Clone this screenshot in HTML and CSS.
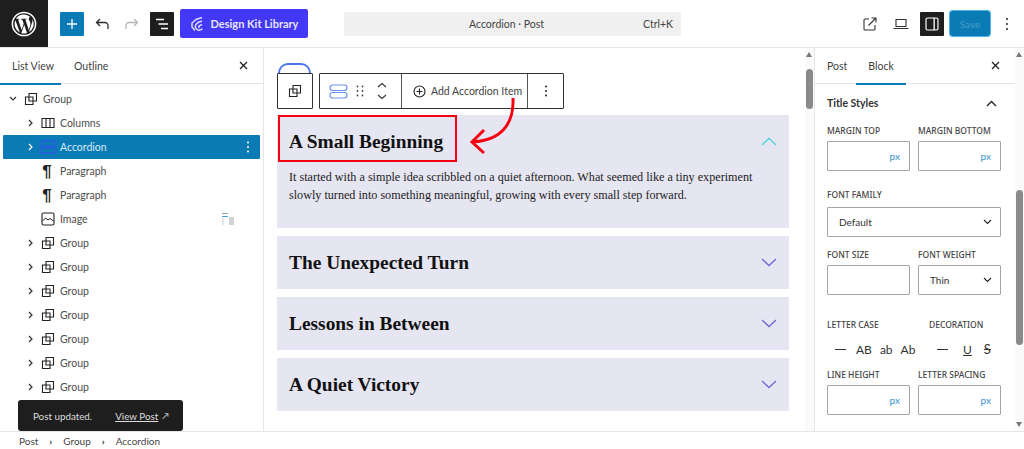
FILE: index.html
```html
<!DOCTYPE html>
<html lang="en">
<head>
<meta charset="utf-8">
<title>Accordion · Post</title>
<link rel="stylesheet" href="styles.css">
</head>
<body>
<div class="app">
  <header class="topbar">
    <div class="wp-logo">
      <svg width="26" height="26" viewBox="0 0 26 26"><circle cx="13" cy="13" r="11.600" fill="none" stroke="#fff" stroke-width="1.500"/><path fill="#fff" d="M3.600 13c0 3.700 2.200 6.900 5.300 8.500L4.400 9.200A9.400 9.400 0 0 0 3.600 13zm15.800-.5c0-1.200-.4-2-.8-2.600-.5-.8-.9-1.400-.9-2.200 0-.9.600-1.700 1.600-1.700h.1A9.400 9.400 0 0 0 5 7.800h.6c1 0 2.500-.1 2.500-.1.500 0 .6.700.1.800 0 0-.5.100-1.100.1l3.500 10.400 2.100-6.300-1.500-4.100c-.5 0-1-.1-1-.1-.5 0-.5-.8.100-.8 0 0 1.600.1 2.500.1 1 0 2.500-.1 2.500-.1.500 0 .6.700.1.800 0 0-.5.100-1.100.1l3.500 10.300 1-3.200c.4-1.300.7-2.200.7-3zm-6.200 1.300-2.900 8.400a9.500 9.500 0 0 0 5.800-.2l-.1-.1zm8.300-5.500v1c0 1-.2 2-.7 3.300l-2.900 8.400a9.400 9.400 0 0 0 3.600-12.700z"/></svg>
    </div>
    <div class="top-left">
      <button class="btn-add" type="button"><svg width="12" height="12" viewBox="0 0 12 12"><path d="M6 1v10M1 6h10" stroke="#fff" stroke-width="1.300"/></svg></button>
      <svg class="ico-undo" width="16" height="16" viewBox="0 0 16 16"><path d="M14 13V9.500A3 3 0 0 0 11 6.500H3M6 3 2.500 6.500 6 10" fill="none" stroke="#2b2b2b" stroke-width="1.300"/></svg>
      <svg class="ico-redo" width="16" height="16" viewBox="0 0 16 16"><path d="M2 13V9.500A3 3 0 0 1 5 6.500h8M10 3l3.500 3.500L10 10" fill="none" stroke="#b5b5b5" stroke-width="1.300"/></svg>
      <button class="btn-list" type="button"><svg width="14" height="12" viewBox="0 0 14 12"><path d="M1 1.500h8M3.500 6h9.500M6 10.500h7" stroke="#fff" stroke-width="1.300"/></svg></button>
      <button class="btn-kit" type="button">
        <svg width="14" height="16" viewBox="0 0 14 16"><path d="M12 1.500 6 3.500 2 7v4l3 3.500M12 5 8 6.500 5.500 9v3l3 2.500 4-1.500M12 8.500 9 10v2" fill="none" stroke="#d9d7ff" stroke-width="1.500"/></svg>
        <span>Design Kit Library</span>
      </button>
    </div>
    <div class="cmd"><span class="cmd-title">Accordion · Post</span><span class="cmd-key">Ctrl+K</span></div>
    <div class="top-right">
      <svg width="14" height="14" viewBox="0 0 14 14"><path d="M6 2H2a1 1 0 0 0-1 1v9a1 1 0 0 0 1 1h9a1 1 0 0 0 1-1V8M5.500 8.500l7.500-7.500M8.500 1H13v4.500" fill="none" stroke="#333" stroke-width="1.100"/></svg>
      <svg class="ico-laptop" width="16" height="12" viewBox="0 0 16 12"><path d="M3 1.500h10v7H3zM.5 10.500h15" fill="none" stroke="#333" stroke-width="1.100"/></svg>
      <button class="btn-panel" type="button"><svg width="14" height="14" viewBox="0 0 14 14"><rect x="1" y="1" width="12" height="12" rx="1.500" fill="none" stroke="#fff" stroke-width="1.200"/><rect x="8.500" y="1" width="1.300" height="12" fill="#fff"/></svg></button>
      <button class="btn-save" type="button">Save</button>
      <svg class="ico-more" width="4" height="14" viewBox="0 0 4 14"><circle cx="2" cy="2" r="1.100" fill="#333"/><circle cx="2" cy="7" r="1.100" fill="#333"/><circle cx="2" cy="12" r="1.100" fill="#333"/></svg>
    </div>
  </header>

  <div class="workspace">
    <aside class="left">
      <div class="tabs left-tabs">
        <span class="tab tab-on tab-list">List View</span>
        <span class="tab tab-outline">Outline</span>
        <svg class="tab-x" width="9" height="9" viewBox="0 0 9 9"><path d="M1 1l7 7M8 1 1 8" stroke="#222" stroke-width="1.300"/></svg>
      </div>
      <ul class="tree">
        <li class="row lvl0"><svg class="chev" width="8" height="6" viewBox="0 0 8 6"><path d="M1 1l3 3 3-3" fill="none" stroke="#333" stroke-width="1.200"/></svg><svg class="bi" width="14" height="14" viewBox="0 0 14 14"><path d="M5 1.500h7.500V9H5zM1.500 5H9v7.500H1.500z" fill="none" stroke="#222" stroke-width="1.100"/></svg><span>Group</span></li>
        <li class="row"><svg class="chev" width="6" height="8" viewBox="0 0 6 8"><path d="M1 1l3 3-3 3" fill="none" stroke="#333" stroke-width="1.200"/></svg><svg class="bi" width="14" height="12" viewBox="0 0 14 12"><path d="M1 1.500h12v9H1zM5 1.500v9M9 1.500v9" fill="none" stroke="#222" stroke-width="1.100"/></svg><span>Columns</span></li>
        <li class="row row-on"><svg class="chev" width="6" height="8" viewBox="0 0 6 8"><path d="M1 1l3 3-3 3" fill="none" stroke="#fff" stroke-width="1.200"/></svg><svg class="bi" width="18" height="14" viewBox="0 0 18 14"><rect x="1" y="1" width="16" height="5" rx="2.500" fill="none" stroke="#2a5be0" stroke-width="1.400"/><rect x="1" y="8" width="16" height="5" rx="2.500" fill="none" stroke="#2a5be0" stroke-width="1.400"/></svg><span>Accordion</span><svg class="row-more" width="4" height="12" viewBox="0 0 4 12"><circle cx="2" cy="1.500" r="1" fill="#fff"/><circle cx="2" cy="6" r="1" fill="#fff"/><circle cx="2" cy="10.500" r="1" fill="#fff"/></svg></li>
        <li class="row row-leaf"><span class="para">¶</span><span>Paragraph</span></li>
        <li class="row row-leaf"><span class="para">¶</span><span>Paragraph</span></li>
        <li class="row row-leaf"><svg class="bi" width="14" height="14" viewBox="0 0 14 14"><rect x="1" y="1" width="12" height="12" rx="1.500" fill="none" stroke="#222" stroke-width="1.100"/><path d="M1.500 9l3-3 2.500 2 2-1.500 3.500 2.500" fill="none" stroke="#222" stroke-width="1"/></svg><span>Image</span>
          <svg class="thumb" width="14" height="14" viewBox="0 0 14 14"><rect x="1" y="1" width="6" height="1" fill="#8aa"/><rect x="1" y="4" width="6" height="1" fill="#4aa3d8"/><rect x="1" y="6" width="2" height="7" fill="#e6e6e6"/><rect x="8" y="5" width="5" height="8" fill="#cfd3d6"/></svg></li>
        <li class="row"><svg class="chev" width="6" height="8" viewBox="0 0 6 8"><path d="M1 1l3 3-3 3" fill="none" stroke="#333" stroke-width="1.200"/></svg><svg class="bi" width="14" height="14" viewBox="0 0 14 14"><path d="M5 1.500h7.500V9H5zM1.500 5H9v7.500H1.500z" fill="none" stroke="#222" stroke-width="1.100"/></svg><span>Group</span></li>
        <li class="row"><svg class="chev" width="6" height="8" viewBox="0 0 6 8"><path d="M1 1l3 3-3 3" fill="none" stroke="#333" stroke-width="1.200"/></svg><svg class="bi" width="14" height="14" viewBox="0 0 14 14"><path d="M5 1.500h7.500V9H5zM1.500 5H9v7.500H1.500z" fill="none" stroke="#222" stroke-width="1.100"/></svg><span>Group</span></li>
        <li class="row"><svg class="chev" width="6" height="8" viewBox="0 0 6 8"><path d="M1 1l3 3-3 3" fill="none" stroke="#333" stroke-width="1.200"/></svg><svg class="bi" width="14" height="14" viewBox="0 0 14 14"><path d="M5 1.500h7.500V9H5zM1.500 5H9v7.500H1.500z" fill="none" stroke="#222" stroke-width="1.100"/></svg><span>Group</span></li>
        <li class="row"><svg class="chev" width="6" height="8" viewBox="0 0 6 8"><path d="M1 1l3 3-3 3" fill="none" stroke="#333" stroke-width="1.200"/></svg><svg class="bi" width="14" height="14" viewBox="0 0 14 14"><path d="M5 1.500h7.500V9H5zM1.500 5H9v7.500H1.500z" fill="none" stroke="#222" stroke-width="1.100"/></svg><span>Group</span></li>
        <li class="row"><svg class="chev" width="6" height="8" viewBox="0 0 6 8"><path d="M1 1l3 3-3 3" fill="none" stroke="#333" stroke-width="1.200"/></svg><svg class="bi" width="14" height="14" viewBox="0 0 14 14"><path d="M5 1.500h7.500V9H5zM1.500 5H9v7.500H1.500z" fill="none" stroke="#222" stroke-width="1.100"/></svg><span>Group</span></li>
        <li class="row"><svg class="chev" width="6" height="8" viewBox="0 0 6 8"><path d="M1 1l3 3-3 3" fill="none" stroke="#333" stroke-width="1.200"/></svg><svg class="bi" width="14" height="14" viewBox="0 0 14 14"><path d="M5 1.500h7.500V9H5zM1.500 5H9v7.500H1.500z" fill="none" stroke="#222" stroke-width="1.100"/></svg><span>Group</span></li>
        <li class="row"><svg class="chev" width="6" height="8" viewBox="0 0 6 8"><path d="M1 1l3 3-3 3" fill="none" stroke="#333" stroke-width="1.200"/></svg><svg class="bi" width="14" height="14" viewBox="0 0 14 14"><path d="M5 1.500h7.500V9H5zM1.500 5H9v7.500H1.500z" fill="none" stroke="#222" stroke-width="1.100"/></svg><span>Group</span></li>
      </ul>
    </aside>

    <main class="canvas">
      <div class="canvas-inner">
        <section class="item item-open">
          <div class="item-head"><h2>A Small Beginning</h2>
            <svg width="16" height="9" viewBox="0 0 16 9"><path d="M1 8l7-6.500L15 8" fill="none" stroke="#4fd3e0" stroke-width="1.400"/></svg></div>
          <p>It started with a simple idea scribbled on a quiet afternoon. What seemed like a tiny experiment slowly turned into something meaningful, growing with every small step forward.</p>
        </section>
        <section class="item"><div class="item-head"><h2>The Unexpected Turn</h2><svg width="16" height="9" viewBox="0 0 16 9"><path d="M1 1l7 6.500L15 1" fill="none" stroke="#6f66d8" stroke-width="1.300"/></svg></div></section>
        <section class="item"><div class="item-head"><h2>Lessons in Between</h2><svg width="16" height="9" viewBox="0 0 16 9"><path d="M1 1l7 6.500L15 1" fill="none" stroke="#6f66d8" stroke-width="1.300"/></svg></div></section>
        <section class="item"><div class="item-head"><h2>A Quiet Victory</h2><svg width="16" height="9" viewBox="0 0 16 9"><path d="M1 1l7 6.500L15 1" fill="none" stroke="#6f66d8" stroke-width="1.300"/></svg></div></section>
      </div>
      <div class="peek"></div>
      <div class="block-toolbar">
        <div class="tb-group tb-single"><svg width="14" height="14" viewBox="0 0 14 14"><path d="M5 1.500h7.500V9H5zM1.500 5H9v7.500H1.500z" fill="none" stroke="#222" stroke-width="1.100"/></svg></div>
        <div class="tb-group tb-main">
          <div class="tb-cell tb-cell-a">
            <svg width="19" height="15" viewBox="0 0 19 15"><rect x="1" y="1" width="17" height="5.500" rx="2.700" fill="none" stroke="#6c93ee" stroke-width="1.200"/><rect x="1" y="8.500" width="17" height="5.500" rx="2.700" fill="none" stroke="#6c93ee" stroke-width="1.200"/></svg>
            <svg width="8" height="12" viewBox="0 0 8 12"><g fill="#444"><circle cx="1.500" cy="1.500" r=".9"/><circle cx="6.500" cy="1.500" r=".9"/><circle cx="1.500" cy="6" r=".9"/><circle cx="6.500" cy="6" r=".9"/><circle cx="1.500" cy="10.500" r=".9"/><circle cx="6.500" cy="10.500" r=".9"/></g></svg>
            <svg width="10" height="18" viewBox="0 0 10 18"><path d="M1 5l4-3.500L9 5M1 13l4 3.500L9 13" fill="none" stroke="#333" stroke-width="1.100"/></svg>
          </div>
          <div class="tb-cell tb-cell-b">
            <svg width="13" height="13" viewBox="0 0 13 13"><circle cx="6.500" cy="6.500" r="5.500" fill="none" stroke="#222" stroke-width="1.100"/><path d="M6.500 3.500v6M3.500 6.500h6" stroke="#222" stroke-width="1.100"/></svg>
            <span>Add Accordion Item</span>
          </div>
          <div class="tb-cell tb-cell-c"><svg width="4" height="12" viewBox="0 0 4 12"><g fill="#222"><circle cx="2" cy="1.500" r="1"/><circle cx="2" cy="6" r="1"/><circle cx="2" cy="10.500" r="1"/></g></svg></div>
        </div>
      </div>
      <div class="red-box"></div>
      <svg class="arrow" width="50" height="60" viewBox="0 0 50 60"><path d="M44 0C45 24 34 42 4 44M15 32 3 44l12 11" fill="none" stroke="#f40010" stroke-width="3"/></svg>
      <div class="vscroll canvas-scroll"><i class="up"></i><b class="thumb-bar"></b></div>
    </main>

    <aside class="right">
      <div class="right-body">
        <div class="tabs right-tabs">
          <span class="tab">Post</span>
          <span class="tab tab-on tab-block">Block</span>
          <svg class="tab-x" width="9" height="9" viewBox="0 0 9 9"><path d="M1 1l7 7M8 1 1 8" stroke="#222" stroke-width="1.300"/></svg>
        </div>
        <div class="panel">
          <div class="panel-head"><strong>Title Styles</strong><svg width="11" height="7" viewBox="0 0 11 7"><path d="M1 6l4.500-4.500L10 6" fill="none" stroke="#222" stroke-width="1.400"/></svg></div>
          <div class="grid2">
            <div class="field"><label>MARGIN TOP</label><div class="input"><em>px</em></div></div>
            <div class="field"><label>MARGIN BOTTOM</label><div class="input"><em>px</em></div></div>
          </div>
          <div class="field field-font"><label>FONT FAMILY</label><div class="input select"><span>Default</span><svg width="9" height="6" viewBox="0 0 9 6"><path d="M1 1l3.500 3.500L8 1" fill="none" stroke="#222" stroke-width="1.100"/></svg></div></div>
          <div class="grid2">
            <div class="field"><label>FONT SIZE</label><div class="input"></div></div>
            <div class="field"><label>FONT WEIGHT</label><div class="input select"><span>Thin</span><svg width="9" height="6" viewBox="0 0 9 6"><path d="M1 1l3.500 3.500L8 1" fill="none" stroke="#222" stroke-width="1.100"/></svg></div></div>
          </div>
          <div class="case-row">
            <div class="case-col"><label>LETTER CASE</label>
              <div class="glyphs"><span class="dash"></span><span>AB</span><span>ab</span><span>Ab</span></div></div>
            <div class="case-col case-dec"><label>DECORATION</label>
              <div class="glyphs"><span class="dash"></span><span class="under">U</span><span class="strike">S</span></div></div>
          </div>
          <div class="grid2">
            <div class="field"><label>LINE HEIGHT</label><div class="input"><em>px</em></div></div>
            <div class="field"><label>LETTER SPACING</label><div class="input"><em>px</em></div></div>
          </div>
        </div>
      </div>
      <div class="vscroll right-scroll"><i class="up"></i><b class="thumb-bar"></b><i class="down"></i></div>
    </aside>
  </div>

  <footer class="crumbs">
    <span>Post</span><span class="sep">›</span><span>Group</span><span class="sep">›</span><span>Accordion</span>
  </footer>
  <div class="snackbar"><span>Post updated.</span><a href="#">View Post</a><span class="ext">↗</span></div>
</div>
</body>
</html>
```
FILE: styles.css
```css
* { box-sizing: border-box; }
html, body { margin: 0; height: 100%; overflow: hidden; }
body { font-family: Lato, "Noto Sans", sans-serif; font-size: 11px; color: #3a3a3a; background: #fff; }
button { border: 0; padding: 0; font: inherit; display: flex; align-items: center; justify-content: center; }
ul { list-style: none; margin: 0; padding: 0; }

.app { position: relative; width: 1024px; height: 449px; display: flex; flex-direction: column; }

.topbar { height: 48px; flex: none; display: flex; align-items: center; border-bottom: 1px solid #e6e6e6; position: relative; }
.wp-logo { width: 48px; height: 47px; background: #1e1e1e; display: flex; align-items: center; justify-content: center; flex: none; }
.top-left { display: flex; align-items: center; margin-left: 12px; }
.btn-add { width: 24px; height: 24px; background: #0a7bb5; border-radius: 1px; }
.ico-undo { margin-left: 10px; }
.ico-redo { margin-left: 14px; }
.btn-list { width: 24px; height: 24px; background: #1e1e1e; border-radius: 1px; margin-left: 10px; }
.btn-kit { width: 128px; height: 29px; background: #4338f5; color: #e6e4ff; border-radius: 2px; margin-left: 6px; gap: 7px; font-weight: 700; font-size: 11px; padding-right: 0; }
.cmd { position: absolute; left: 344px; top: 12px; width: 337px; height: 24px; background: #f0f0f0; border-radius: 2px; display: flex; align-items: center; font-size: 10.500px; color: #444; }
.cmd-title { flex: 1; text-align: center; padding-left: 26px; }
.cmd-key { margin-right: 8px; white-space: nowrap; }
.top-right { margin-left: auto; display: flex; align-items: center; }
.ico-laptop { margin-left: 16px; }
.btn-panel { width: 24px; height: 24px; background: #1e1e1e; border-radius: 1px; margin-left: 11px; }
.btn-save { width: 40px; height: 25px; background: #0a7bb5; color: #4a9ccb; border-radius: 2px; margin-left: 6px; outline: 1px solid #4db3e6; font-size: 10px; }
.ico-more { margin-left: 15px; margin-right: 15px; }

.workspace { flex: 1; min-height: 0; display: flex; }
.left { width: 264px; flex: none; border-right: 1px solid #e6e6e6; overflow: hidden; }
.tabs { display: flex; height: 36px; align-items: center; border-bottom: 1px solid #e6e6e6; position: relative; }
.tab { height: 36px; display: flex; align-items: center; font-size: 10.500px; color: #3f3f3f; position: relative; }
.tab-on::after { content: ""; position: absolute; left: 0; right: 0; bottom: -1px; height: 1.500px; background: #0a7bb5; }
.tab-list { width: 61px; padding-left: 12px; }
.tab-outline { margin-left: 13px; }
.tab-x { margin-left: auto; margin-right: 15px; }

.tree { padding-top: 3px; }
.row { height: 24px; display: flex; align-items: center; padding-left: 28px; font-size: 10.500px; color: #4d4d4d; position: relative; }
.row .chev { flex: none; }
.row .bi { margin-left: 7px; margin-right: 5px; flex: none; }
.lvl0 { padding-left: 9px; }
.row-on { background: #0a7bb5; color: #d7ecf8; margin: 0 3px; padding-left: 25px; border-radius: 1px; }
.row-on .bi { margin-left: 5px; margin-right: 3px; }
.row-more { position: absolute; right: 10px; top: 6px; }
.row-leaf { padding-left: 40px; }
.row-leaf .bi { margin-left: 1px; }
.para { width: 14px; margin-right: 6px; font: 700 17px/1 "Liberation Sans", sans-serif; color: #222; text-align: center; }
.thumb { position: absolute; left: 221px; top: 5px; }

.canvas { flex: 1; min-width: 0; position: relative; overflow: hidden; background: #fff; }
.canvas-inner { padding: 67px 25px 0 13px; display: flex; flex-direction: column; gap: 8px; }
.item { background: #e6e6f2; padding: 0 12px; }
.item-open { height: 113px; }
.item-head { height: 53px; display: flex; align-items: center; justify-content: space-between; }
h2 { margin: 0; font: 700 19.400px/1 "Liberation Serif", serif; color: #111; }
.item p { margin: 0; font: 12.150px/18px "Liberation Serif", serif; color: #222; }

.peek { position: absolute; left: 14px; top: 15px; width: 33px; height: 18px; border: 2px solid #4f75ea; border-bottom: 0; border-radius: 10px 10px 0 0; }
.block-toolbar { position: absolute; left: 13px; top: 25px; display: flex; gap: 6px; height: 36px; }
.tb-group { background: #fff; border: 1px solid #333; border-radius: 1px; display: flex; align-items: center; justify-content: center; }
.tb-single { width: 36px; }
.tb-main { width: 245px; justify-content: flex-start; }
.tb-cell { height: 100%; display: flex; align-items: center; }
.tb-cell-a { width: 82px; padding-left: 9px; gap: 8px; border-right: 1px solid #555; }
.tb-cell-a svg:last-child { margin-left: 5px; }
.tb-cell-b { width: 126px; padding-left: 11px; gap: 5px; border-right: 1px solid #555; font-size: 10.500px; color: #3f3f3f; white-space: nowrap; }
.tb-cell-c { flex: 1; justify-content: center; }

.red-box { position: absolute; left: 14px; top: 67px; width: 179px; height: 47px; border: 2px solid #f40010; }
.arrow { position: absolute; left: 205px; top: 50px; }

.vscroll { position: absolute; top: 0; width: 9px; height: 100%; background: #fafafa; }
.canvas-scroll { right: 0; }
.thumb-bar { position: absolute; left: 1px; width: 7px; background: #8a8a8a; border-radius: 4px; }
.canvas-scroll .thumb-bar { top: 21px; height: 40px; }
.up { position: absolute; left: 1px; top: 4px; border: 3.500px solid transparent; border-top: 0; border-bottom: 5px solid #777; }
.down { position: absolute; left: 1px; bottom: 4px; border: 3.500px solid transparent; border-bottom: 0; border-top: 5px solid #777; }

.right { width: 210px; flex: none; position: relative; border-left: 1px solid #e6e6e6; overflow: hidden; }
.right-body { width: 200px; }
.right-tabs { padding-left: 12px; gap: 21px; }
.tab-block { padding: 0 12px; margin-left: -12px; }
.right-tabs .tab-x { margin-right: 15px; }
.panel { padding: 0 12px; }
.panel-head { display: flex; justify-content: space-between; align-items: center; height: 24px; margin-top: 7px; margin-bottom: 10px; font-size: 10.500px; color: #333; padding-right: 6px; }
.panel-head strong { font-weight: 700; }
.grid2 { display: grid; grid-template-columns: 83px 83px; gap: 8px; }
label { display: block; font: 500 8.500px/12px "Noto Sans", sans-serif; color: #444; height: 16px; white-space: nowrap; }
.input { height: 30px; border: 1px solid #a5a5a5; border-radius: 1px; display: flex; align-items: center; justify-content: flex-end; padding-right: 9px; margin-bottom: 16px; }
.input em { font-style: normal; color: #3a93cc; font-size: 10px; }
.select { justify-content: space-between; padding: 0 8px 0 11px; font-size: 10px; color: #333; }
.field-font { margin-top: 2px; }
.field-font label { height: 18px; }
.field-font .input { width: 174px; margin-bottom: 12px; }
.case-row { display: flex; height: 50px; margin-top: 8px; }
.case-col { width: 102px; flex: none; }
.glyphs { display: flex; align-items: center; gap: 8px; margin-top: 6px; padding-left: 8px; font-size: 12px; color: #333; height: 16px; }
.dash { width: 11px; height: 1px; background: #333; margin-right: 2px; }
.under { text-decoration: underline; margin-left: 5px; }
.strike { text-decoration: line-through; margin-left: 4px; font-size: 13px; }
.right-scroll { right: 0; }
.right-scroll .thumb-bar { top: 142px; height: 155px; }

.crumbs { height: 18px; flex: none; border-top: 1px solid #e6e6e6; display: flex; align-items: center; padding-left: 19px; font-size: 10px; color: #444; gap: 11px; }
.sep { font-weight: 700; color: #333; }
.snackbar { position: absolute; left: 18px; top: 400px; width: 165px; height: 31px; background: #1e1e1e; border-radius: 3px; display: flex; align-items: center; padding-left: 15px; color: #ddd; font-size: 9.800px; }
.snackbar a { color: #ddd; margin-left: 23px; }
.ext { margin-left: 4px; font-size: 9px; }
```
